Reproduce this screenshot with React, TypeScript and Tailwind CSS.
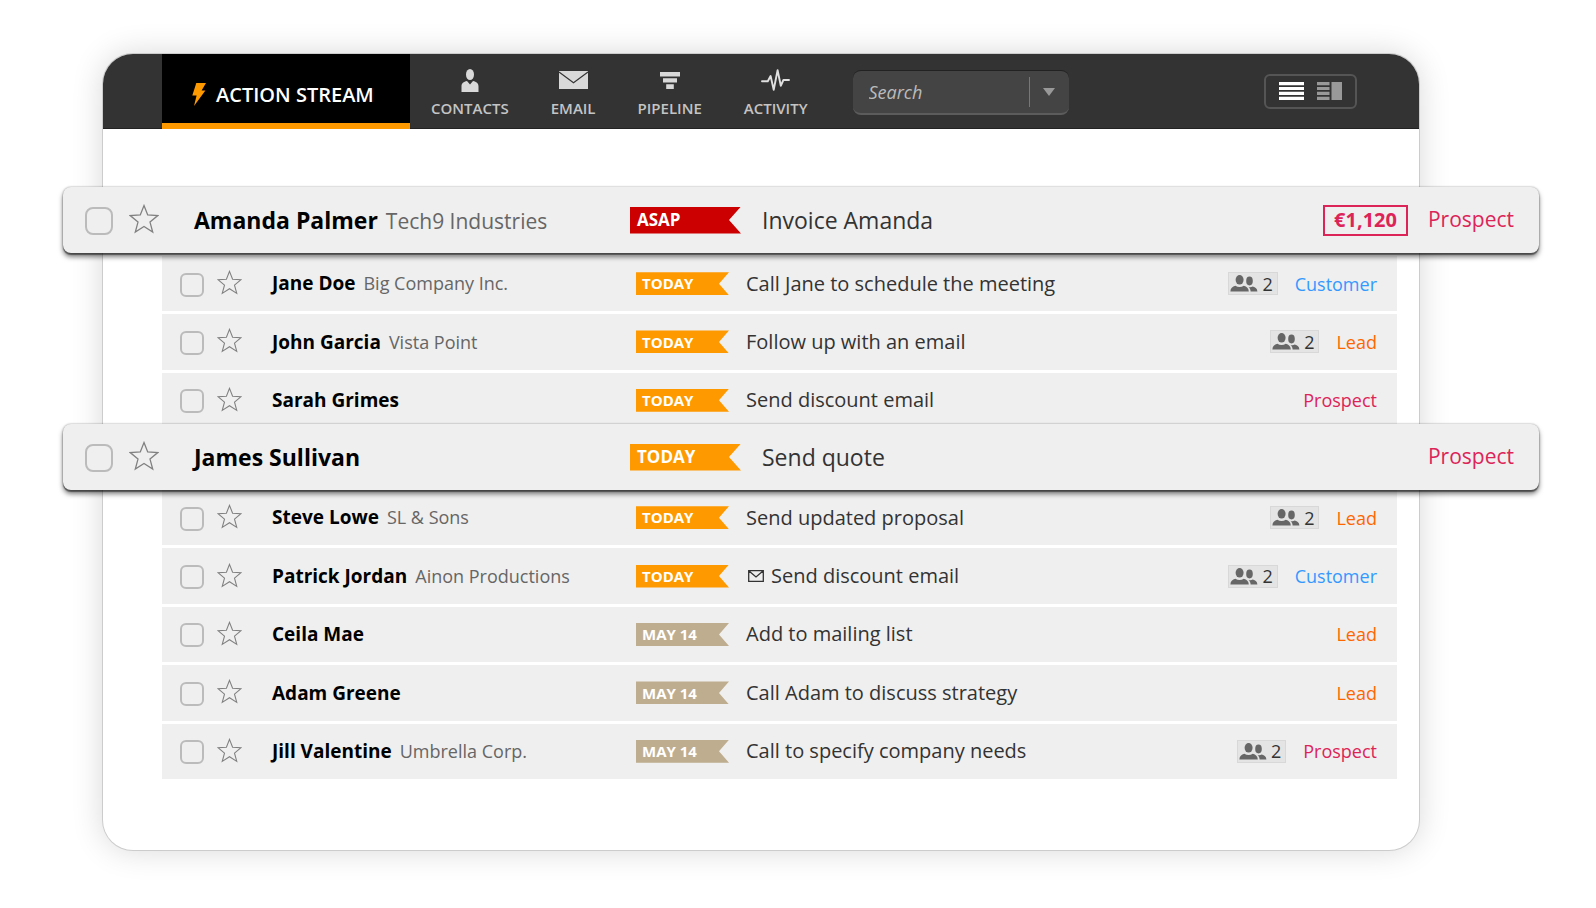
import { useState } from "react";
import clsx from "clsx";

type Stage = "Prospect" | "Customer" | "Lead";

type Action = {
  id: number;
  name: string;
  company?: string;
  due: "ASAP" | "TODAY" | "MAY 14";
  task: string;
  isEmail?: boolean;
  value?: string;
  contacts?: number;
  stage: Stage;
};

const featured: Action = {
  id: 1,
  name: "Amanda Palmer",
  company: "Tech9 Industries",
  due: "ASAP",
  task: "Invoice Amanda",
  value: "€1,120",
  stage: "Prospect",
};

const firstActions: Action[] = [
  { id: 2, name: "Jane Doe", company: "Big Company Inc.", due: "TODAY", task: "Call Jane to schedule the meeting", contacts: 2, stage: "Customer" },
  { id: 3, name: "John Garcia", company: "Vista Point", due: "TODAY", task: "Follow up with an email", contacts: 2, stage: "Lead" },
  { id: 4, name: "Sarah Grimes", due: "TODAY", task: "Send discount email", stage: "Prospect" },
];

const quote: Action = {
  id: 5,
  name: "James Sullivan",
  due: "TODAY",
  task: "Send quote",
  stage: "Prospect",
};

const nextActions: Action[] = [
  { id: 6, name: "Steve Lowe", company: "SL & Sons", due: "TODAY", task: "Send updated proposal", contacts: 2, stage: "Lead" },
  { id: 7, name: "Patrick Jordan", company: "Ainon Productions", due: "TODAY", task: "Send discount email", isEmail: true, contacts: 2, stage: "Customer" },
  { id: 8, name: "Ceila Mae", due: "MAY 14", task: "Add to mailing list", stage: "Lead" },
  { id: 9, name: "Adam Greene", due: "MAY 14", task: "Call Adam to discuss strategy", stage: "Lead" },
  { id: 10, name: "Jill Valentine", company: "Umbrella Corp.", due: "MAY 14", task: "Call to specify company needs", contacts: 2, stage: "Prospect" },
];

const stageColor: Record<Stage, string> = {
  Prospect: "text-[#dd2458]",
  Customer: "text-[#3399ff]",
  Lead: "text-[#ff6600]",
};

const dueColor = {
  ASAP: "bg-[#cc0000]",
  TODAY: "bg-[#ff9900]",
  "MAY 14": "bg-[#bfad8f]",
};

function BoltIcon() {
  return (
    <svg width="14" height="23" viewBox="0 0 14 23" fill="#ff9900" aria-hidden="true">
      <path d="M4.3 0H14L9.6 7.6H13.4L2 23L4.6 12.6H0.3Z" />
    </svg>
  );
}

function ContactIcon() {
  return (
    <svg width="18" height="23" viewBox="0 0 18 23" fill="#d9d9d9" aria-hidden="true">
      <ellipse cx="9" cy="5.5" rx="4" ry="5.5" />
      <path d="M0.5 23V17.5C0.5 14.2 2.6 12.6 6 12L9 15.4L12 12C15.4 12.6 17.5 14.2 17.5 17.5V23Z" />
    </svg>
  );
}

function MailIcon() {
  return (
    <svg width="29" height="18" viewBox="0 0 29 18" aria-hidden="true">
      <rect width="29" height="18" fill="#d9d9d9" />
      <path d="M0 1L14.5 11.8L29 1" fill="none" stroke="#333" strokeWidth="1.1" />
    </svg>
  );
}

function FunnelIcon() {
  return (
    <svg width="20" height="17" viewBox="0 0 20 17" fill="#d9d9d9" aria-hidden="true">
      <path d="M0 0H20V4.6H0ZM3 6.2H17V10.6H3ZM6.2 12.2H13.8V17H6.2Z" />
    </svg>
  );
}

function PulseIcon() {
  return (
    <svg width="29" height="22" viewBox="0 0 29 22" fill="none" stroke="#e0e0e0" strokeWidth="1.9" strokeLinejoin="round" strokeLinecap="round" aria-hidden="true">
      <path d="M1 12.2H6.8L9.6 7L12.7 20.8L16.6 1.2L19.8 16.8L22.4 11H28" />
    </svg>
  );
}

function StarIcon({ large }: { large: boolean }) {
  return (
    <svg
      className={large ? "size-[30px]" : "size-[25px]"}
      viewBox="0 0 30 30"
      fill="none"
      stroke="#808080"
      strokeWidth="1.3"
      aria-hidden="true"
    >
      <path d="M15 1.6L18.7 11L28.8 11.6L21 18.1L23.7 28L15 22.5L6.3 28L9 18.1L1.2 11.6L11.3 11Z" />
    </svg>
  );
}

function PeopleIcon() {
  return (
    <svg width="28" height="17" viewBox="0 0 28 17" fill="#666" aria-hidden="true">
      <ellipse cx="9.6" cy="4.8" rx="4" ry="4.8" />
      <ellipse cx="19.5" cy="6" rx="3.3" ry="4.4" />
      <path d="M0.4 16.6C0.4 13.2 2.4 11.6 5.4 10.8C8 12.4 11.2 12.4 13.8 10.8C16.8 11.6 18.6 13.2 18.8 16.6Z" />
      <path d="M20.6 16.6C20.6 14.8 19.8 13 18.6 12C20 12.4 21.4 12.2 22.8 11.6C25.6 12.2 27.2 13.8 27.4 16.6Z" />
    </svg>
  );
}

function EnvelopeOutline() {
  return (
    <svg className="mr-[7px] ml-0.5" width="16" height="12" viewBox="0 0 16 12" fill="none" stroke="#333" strokeWidth="1.3" aria-hidden="true">
      <path d="M0.7 0.7H15.3V11.3H0.7ZM1 1L8 7L15 1" />
    </svg>
  );
}

const navItems = [
  { label: "CONTACTS", icon: <ContactIcon /> },
  { label: "EMAIL", icon: <MailIcon /> },
  { label: "PIPELINE", icon: <FunnelIcon /> },
  { label: "ACTIVITY", icon: <PulseIcon /> },
];

function ActionRow({ action, large = false }: { action: Action; large?: boolean }) {
  const [starred, setStarred] = useState(false);

  return (
    <div
      className={clsx(
        "grid items-center bg-[#efefef]",
        large
          ? "relative z-10 -mr-[120px] -ml-10 h-[66px] grid-cols-[28px_30px_487fr_884fr] rounded-lg pr-[25px] pl-[22px] shadow-[0_0_2px_rgba(0,0,0,0.4),0_2px_1px_rgba(0,0,0,0.4),0_4px_5px_rgba(0,0,0,0.5)]"
          : "mr-[22px] ml-[59px] grid-cols-[24px_25px_407fr_741fr] pr-5 pl-[18px]",
      )}
    >
      <input
        type="checkbox"
        aria-label={`Complete: ${action.task}`}
        className={clsx(
          "appearance-none border-2 border-[#bbb] checked:bg-[#ff9900]",
          large ? "mt-0.5 size-7 rounded-lg" : "mt-0.5 size-6 rounded-md",
        )}
      />
      <button
        type="button"
        aria-label={`Star ${action.name}`}
        aria-pressed={starred}
        onClick={() => setStarred(!starred)}
        className={clsx("mb-0.5", large ? "ml-4" : "ml-[13px]")}
      >
        <StarIcon large={large} />
      </button>
      <div className={clsx("whitespace-nowrap", large ? "pl-[51px]" : "pl-[43px]")}>
        <span className={clsx("font-bold text-black", large ? "text-[23px]" : "text-[19px]")}>
          {action.name}
        </span>
        {action.company && (
          <span className={clsx("ml-2 text-[#666]", large ? "text-[21px]" : "text-lg")}>
            {action.company}
          </span>
        )}
      </div>
      <div className="flex items-center">
        <span
          className={clsx(
            "flex shrink-0 items-center font-bold text-white",
            dueColor[action.due],
            large
              ? "h-[27px] w-[111px] pl-[7px] text-[17px] [clip-path:polygon(0_0,100%_0,calc(100%-12px)_50%,100%_100%,0_100%)]"
              : "h-[23px] w-[93px] pl-1.5 text-[15px] [clip-path:polygon(0_0,100%_0,calc(100%-10px)_50%,100%_100%,0_100%)]",
          )}
        >
          {action.due}
        </span>
        <span
          className={clsx(
            "flex flex-1 items-center whitespace-nowrap text-[#333]",
            large ? "pl-[21px] text-[23px]" : "pl-[17px] text-xl",
          )}
        >
          {action.isEmail && <EnvelopeOutline />}
          {action.task}
        </span>
        {action.value && (
          <span className="mr-5 flex h-[31px] items-center border-2 border-[#dd2458] px-[9px] text-xl font-bold text-[#dd2458]">
            {action.value}
          </span>
        )}
        {action.contacts && (
          <span className="mr-[17px] flex h-[23px] items-center gap-1 border border-[#d8d8d8] bg-[#e4e4e4] pr-1 pl-px text-lg text-[#333]">
            <PeopleIcon />
            {action.contacts}
          </span>
        )}
        <a href="#stage" className={clsx(stageColor[action.stage], large ? "text-[21px]" : "text-lg")}>
          {action.stage}
        </a>
      </div>
    </div>
  );
}

export default function App() {
  const [view, setView] = useState<"list" | "split">("list");

  return (
    <div className="min-h-screen bg-white pt-[54px] pr-[177px] pb-14 pl-[103px] font-['Open_Sans',sans-serif]">
      <div className="rounded-[30px] bg-white pb-[71px] shadow-[0_0_0_1px_#ccc,0_0_32px_rgba(0,0,0,0.16)]">
        <header className="flex h-[75px] items-center rounded-t-[30px] border-b border-[#222] bg-[#333]">
          <nav className="ml-[59px] flex h-full">
            <a
              href="#stream"
              className="-mb-px flex w-[248px] items-center gap-2.5 border-b-6 border-[#ff9900] bg-black pt-3 pl-[30px] text-xl font-semibold whitespace-nowrap text-white"
            >
              <BoltIcon />
              ACTION STREAM
            </a>
            {navItems.map((item) => (
              <a
                key={item.label}
                href={`#${item.label.toLowerCase()}`}
                className="flex flex-col items-center px-[21px] pt-3.5 text-[15px] font-semibold text-[#c4c4c4]"
              >
                <span className="flex h-6 items-center">{item.icon}</span>
                <span className="mt-[5px]">{item.label}</span>
              </a>
            ))}
          </nav>
          <div className="mt-0.5 ml-6 flex h-[45px] w-[216px] items-center rounded-lg border-t border-b-2 border-t-[#222] border-b-[#5c5c5c] bg-[#444]">
            <input
              type="text"
              aria-label="Search"
              placeholder="Search"
              className="min-w-0 flex-1 bg-transparent pl-4 text-lg text-white italic outline-none placeholder:text-[#bbb]"
            />
            <button
              type="button"
              aria-label="Search options"
              className="flex h-[30px] w-10 items-center justify-center border-l border-[#777]"
            >
              <svg width="12" height="8" viewBox="0 0 12 8" fill="#999" aria-hidden="true">
                <path d="M0 0H12L6 8Z" />
              </svg>
            </button>
          </div>
          <div className="mr-[62px] ml-auto flex h-[35px] items-center gap-[13px] rounded-md border-2 border-[#555] px-[13px]">
            <button type="button" aria-label="List view" aria-pressed={view === "list"} onClick={() => setView("list")}>
              <svg width="25" height="18" viewBox="0 0 25 18" fill="#fff" aria-hidden="true">
                <path d="M0 0H25V3.2H0ZM0 4.9H25V8.1H0ZM0 9.8H25V13H0ZM0 14.7H25V17.9H0Z" />
              </svg>
            </button>
            <button type="button" aria-label="Split view" aria-pressed={view === "split"} onClick={() => setView("split")}>
              <svg width="25" height="18" viewBox="0 0 25 18" fill="#999" aria-hidden="true">
                <path d="M0 0H12.5V3.2H0ZM0 4.9H12.5V8.1H0ZM0 9.8H12.5V13H0ZM0 14.7H12.5V17.9H0ZM14.5 0H25V17.9H14.5Z" />
              </svg>
            </button>
          </div>
        </header>

        <main className="pt-[58px]">
          <ActionRow action={featured} large />
          <div className="mt-[3px] grid h-[172px] auto-rows-fr gap-[3px]">
            {firstActions.map((action) => (
              <ActionRow key={action.id} action={action} />
            ))}
          </div>
          <div className="-mt-1">
            <ActionRow action={quote} large />
          </div>
          <div className="grid h-[289px] auto-rows-fr gap-[3px]">
            {nextActions.map((action) => (
              <ActionRow key={action.id} action={action} />
            ))}
          </div>
        </main>
      </div>
    </div>
  );
}
